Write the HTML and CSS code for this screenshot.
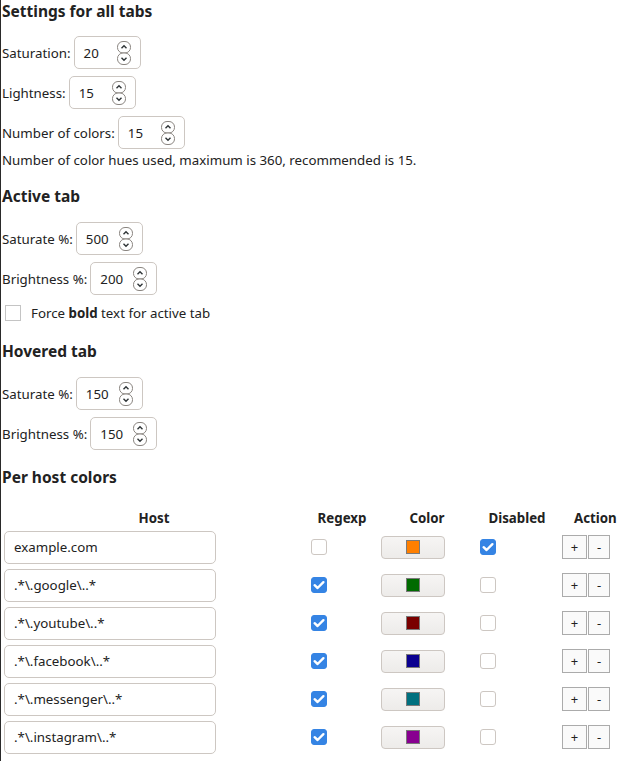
FILE: index.html
```html
<!DOCTYPE html>
<html lang="en">
<head>
<meta charset="utf-8">
<title>Tab colors settings</title>
<link rel="stylesheet" href="styles.css">
</head>
<body>
<svg width="0" height="0" class="defs" aria-hidden="true">
  <symbol id="spin" viewBox="0 0 14 24">
    <rect x="0.5" y="0.5" width="13" height="11.5" rx="5.5" fill="#fff" stroke="#8a8580"/>
    <rect x="0.5" y="12" width="13" height="11.5" rx="5.5" fill="#fff" stroke="#8a8580"/>
    <path d="M4.5 7.3 L7 4.8 L9.5 7.3" fill="none" stroke="#2e3436" stroke-width="1.4"/>
    <path d="M4.5 16.7 L7 19.2 L9.5 16.7" fill="none" stroke="#2e3436" stroke-width="1.4"/>
  </symbol>
  <symbol id="check" viewBox="0 0 16 16">
    <path d="M3.6 8.2 L6.6 11 L12.4 5.2" fill="none" stroke="#fff" stroke-width="2.4" stroke-linecap="round" stroke-linejoin="round"/>
  </symbol>
</svg>

<section class="group">
  <h2 class="title first">Settings for all tabs</h2>
  <div class="field"><span class="label">Saturation:</span><span class="num"><span class="val">20</span><svg class="spin"><use href="#spin"/></svg></span></div>
  <div class="field"><span class="label">Lightness:</span><span class="num"><span class="val">15</span><svg class="spin"><use href="#spin"/></svg></span></div>
  <div class="field"><span class="label">Number of colors:</span><span class="num"><span class="val">15</span><svg class="spin"><use href="#spin"/></svg></span></div>
  <p class="hint">Number of color hues used, maximum is 360, recommended is 15.</p>
</section>

<section class="group">
  <h2 class="title">Active tab</h2>
  <div class="field"><span class="label">Saturate %:</span><span class="num"><span class="val">500</span><svg class="spin"><use href="#spin"/></svg></span></div>
  <div class="field"><span class="label">Brightness %:</span><span class="num"><span class="val">200</span><svg class="spin"><use href="#spin"/></svg></span></div>
  <label class="force"><span class="plainbox"></span>Force&nbsp;<b>bold</b>&nbsp;text for active tab</label>
</section>

<section class="group">
  <h2 class="title">Hovered tab</h2>
  <div class="field"><span class="label">Saturate %:</span><span class="num"><span class="val">150</span><svg class="spin"><use href="#spin"/></svg></span></div>
  <div class="field"><span class="label">Brightness %:</span><span class="num"><span class="val">150</span><svg class="spin"><use href="#spin"/></svg></span></div>
</section>

<section class="group">
  <h2 class="title">Per host colors</h2>
  <table class="hosts">
    <colgroup>
      <col class="c-host"><col class="c-re"><col class="c-color"><col class="c-dis"><col class="c-act">
    </colgroup>
    <thead>
      <tr><th>Host</th><th>Regexp</th><th>Color</th><th>Disabled</th><th class="th-act">Action</th></tr>
    </thead>
    <tbody>
      <tr>
        <td class="td-host"><span class="text">example.com</span></td>
        <td class="td-re"><span class="cb"></span></td>
        <td class="td-color"><span class="colorbtn"><span class="swatch" style="background:#ff7f00"></span></span></td>
        <td class="td-dis"><span class="cb on"><svg><use href="#check"/></svg></span></td>
        <td class="td-act"><span class="act">+</span><span class="act minus">-</span></td>
      </tr>
      <tr>
        <td class="td-host"><span class="text">.*\.google\..*</span></td>
        <td class="td-re"><span class="cb on"><svg><use href="#check"/></svg></span></td>
        <td class="td-color"><span class="colorbtn"><span class="swatch" style="background:#006b00"></span></span></td>
        <td class="td-dis"><span class="cb"></span></td>
        <td class="td-act"><span class="act">+</span><span class="act minus">-</span></td>
      </tr>
      <tr>
        <td class="td-host"><span class="text">.*\.youtube\..*</span></td>
        <td class="td-re"><span class="cb on"><svg><use href="#check"/></svg></span></td>
        <td class="td-color"><span class="colorbtn"><span class="swatch" style="background:#7a0000"></span></span></td>
        <td class="td-dis"><span class="cb"></span></td>
        <td class="td-act"><span class="act">+</span><span class="act minus">-</span></td>
      </tr>
      <tr>
        <td class="td-host"><span class="text">.*\.facebook\..*</span></td>
        <td class="td-re"><span class="cb on"><svg><use href="#check"/></svg></span></td>
        <td class="td-color"><span class="colorbtn"><span class="swatch" style="background:#0a0090"></span></span></td>
        <td class="td-dis"><span class="cb"></span></td>
        <td class="td-act"><span class="act">+</span><span class="act minus">-</span></td>
      </tr>
      <tr>
        <td class="td-host"><span class="text">.*\.messenger\..*</span></td>
        <td class="td-re"><span class="cb on"><svg><use href="#check"/></svg></span></td>
        <td class="td-color"><span class="colorbtn"><span class="swatch" style="background:#00707f"></span></span></td>
        <td class="td-dis"><span class="cb"></span></td>
        <td class="td-act"><span class="act">+</span><span class="act minus">-</span></td>
      </tr>
      <tr>
        <td class="td-host"><span class="text">.*\.instagram\..*</span></td>
        <td class="td-re"><span class="cb on"><svg><use href="#check"/></svg></span></td>
        <td class="td-color"><span class="colorbtn"><span class="swatch" style="background:#880090"></span></span></td>
        <td class="td-dis"><span class="cb"></span></td>
        <td class="td-act"><span class="act">+</span><span class="act minus">-</span></td>
      </tr>
    </tbody>
  </table>
</section>
</body>
</html>
```
FILE: styles.css
```css
html {
  background: #fff;
  overflow: hidden;
}
body {
  margin: 0;
  padding-left: 1px;
  min-height: 100vh;
  border-left: 1px solid #2a2a2a;
  font-family: "Noto Sans", "Open Sans", sans-serif;
  font-size: 13.3px;
  line-height: 18px;
  color: #222;
  box-sizing: border-box;
}
.defs {
  position: absolute;
  width: 0;
  height: 0;
}
.title {
  margin: 16px 0 15px;
  font-size: 15.5px;
  line-height: 22px;
  font-weight: bold;
  color: #222;
}
.title.first {
  margin-top: 0;
  margin-bottom: 14px;
}
.field {
  display: flex;
  align-items: center;
  gap: 3px;
}
.field + .field {
  margin-top: 7px;
}
.num {
  display: flex;
  align-items: center;
  justify-content: space-between;
  box-sizing: border-box;
  width: 67px;
  height: 33px;
  padding: 0 9px 0 9px;
  border: 1px solid #cdc7c2;
  border-radius: 5px;
  background: #fff;
}
.spin {
  width: 14px;
  height: 24px;
}
.hint {
  margin: 2px 0 0;
}
.force {
  display: flex;
  align-items: center;
  height: 22px;
  margin-top: 7px;
  padding-left: 3px;
}
.plainbox {
  box-sizing: border-box;
  width: 16px;
  height: 16px;
  margin-right: 10px;
  border: 1px solid #c4c4c4;
  background: #fff;
}
.hosts {
  width: 624px;
  margin-top: 20px;
  table-layout: fixed;
  border-collapse: collapse;
  border-spacing: 0;
}
.c-host { width: 304px; }
.c-re { width: 72px; }
.c-color { width: 98px; }
.c-dis { width: 82px; }
.c-act { width: 68px; }
.hosts th {
  height: 20px;
  padding: 0;
  text-align: center;
  font-weight: bold;
  white-space: nowrap;
}
.hosts th.th-act {
  text-align: left;
  padding-left: 16px;
}
.hosts td {
  height: 38px;
  padding: 0;
  vertical-align: middle;
}
.hosts .td-host { padding-left: 2px; }
.hosts .td-re { padding-left: 5px; }
.hosts .td-color { padding-left: 3px; }
.hosts .td-dis { padding-left: 4px; }
.hosts .td-act { padding-left: 4px; white-space: nowrap; }
.text {
  display: flex;
  align-items: center;
  box-sizing: border-box;
  width: 212px;
  height: 33px;
  padding-left: 9px;
  border: 1px solid #cdc7c2;
  border-radius: 5px;
  background: #fff;
}
.cb {
  display: flex;
  align-items: center;
  justify-content: center;
  box-sizing: border-box;
  width: 16px;
  height: 16px;
  border: 1px solid #cdc7c2;
  border-radius: 3px;
  background: #fff;
}
.cb.on {
  border-color: #3584e4;
  background: #3584e4;
}
.cb svg {
  width: 16px;
  height: 16px;
  flex: none;
}
.colorbtn {
  display: flex;
  align-items: center;
  justify-content: center;
  box-sizing: border-box;
  width: 64px;
  height: 23px;
  border: 1px solid #cdc7c2;
  border-radius: 4px;
  background: linear-gradient(#f6f5f4, #edebe9);
}
.swatch {
  box-sizing: border-box;
  width: 14px;
  height: 14px;
  border: 1px solid #7a7a7a;
}
.act {
  display: inline-flex;
  align-items: center;
  justify-content: center;
  box-sizing: border-box;
  width: 25px;
  height: 24px;
  border: 1px solid #ababab;
  background: #fafafa;
  font-size: 13px;
  vertical-align: middle;
}
.act.minus {
  width: 22px;
  margin-left: 1px;
}
```
